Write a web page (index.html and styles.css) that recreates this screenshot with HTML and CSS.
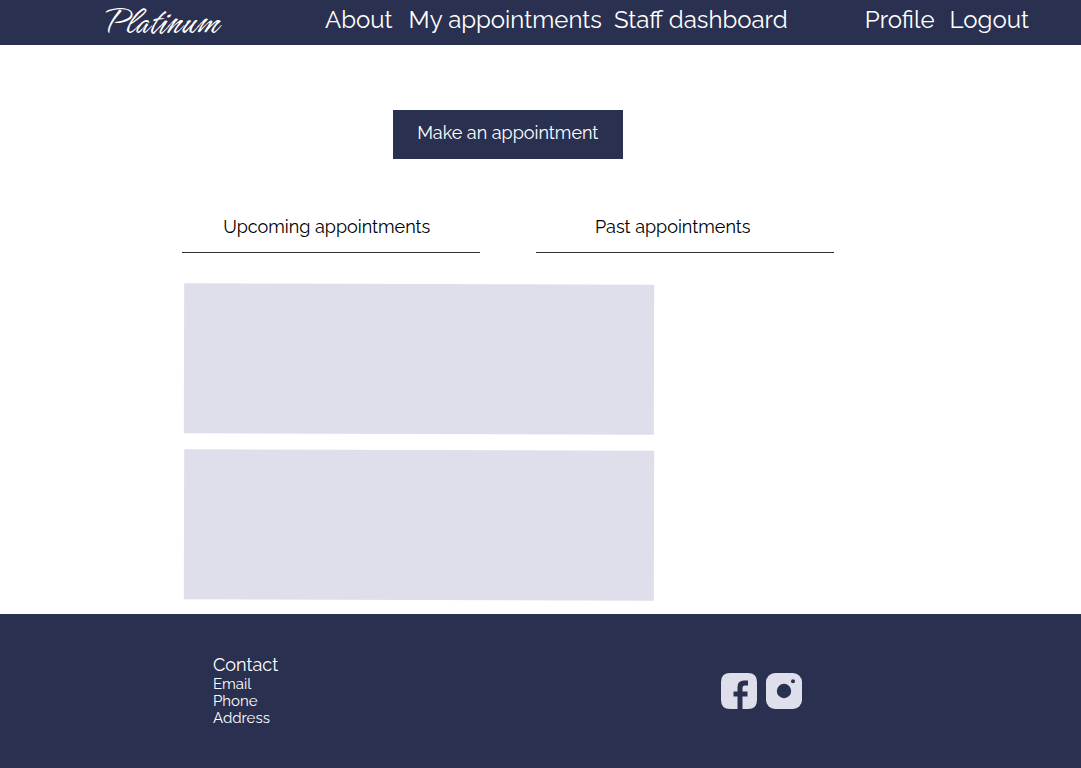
FILE: index.html
```html
<!DOCTYPE html>
<html lang="en">
<head>
<meta charset="utf-8">
<meta name="viewport" content="width=device-width, initial-scale=1">
<title>Platinum – My appointments</title>
<link rel="stylesheet" href="styles.css">
</head>
<body>
<header class="site-header">
  <a class="logo" href="#">Platinum</a>
  <nav class="nav nav-main" aria-label="Main">
    <a class="nav-wide" href="#">About</a>
    <a href="#">My appointments</a>
    <a href="#">Staff dashboard</a>
  </nav>
  <nav class="nav nav-account" aria-label="Account">
    <a href="#">Profile</a>
    <a href="#">Logout</a>
  </nav>
</header>
<main class="content">
  <button class="make-button" type="button">Make an appointment</button>
  <div class="tabs" role="tablist">
    <button class="tab tab-upcoming" type="button" role="tab" aria-selected="true">Upcoming appointments</button>
    <button class="tab tab-past" type="button" role="tab" aria-selected="false">Past appointments</button>
  </div>
  <div class="cards">
    <article class="card"></article>
    <article class="card"></article>
  </div>
</main>
<footer class="site-footer">
  <address class="contact">
    <h2 class="contact-title">Contact</h2>
    <a href="#">Email</a>
    <a href="#">Phone</a>
    <a href="#">Address</a>
  </address>
  <div class="social">
    <a href="#" aria-label="Facebook">
      <svg width="36" height="36" viewBox="0 0 36 36"><path fill="#dfdeeb" d="M9 0H27Q36 0 36 9V27Q36 36 27 36H21.500V23.500H26.500V18.500H21.500V15Q21.500 12.500 24 12.500H27V7.500H23Q16.500 7.500 16.500 14V18.500H12.500V23.500H16.500V36H9Q0 36 0 27V9Q0 0 9 0Z"/></svg>
    </a>
    <a href="#" aria-label="Instagram">
      <svg width="36" height="36" viewBox="0 0 36 36"><rect width="36" height="36" rx="9" fill="#dfdeeb"/><circle cx="18" cy="18" r="7.200" fill="#2a3050"/><circle cx="27" cy="8.300" r="2" fill="#2a3050"/></svg>
    </a>
  </div>
</footer>
</body>
</html>
```
FILE: styles.css
```css
* { box-sizing: border-box; }

body {
  margin: 0;
  min-height: 100vh;
  display: flex;
  flex-direction: column;
  background: #fff;
  color: #000;
  font-family: Raleway, Lato, sans-serif;
  font-size: 18px;
}

a { color: inherit; text-decoration: none; }

button { font: inherit; cursor: pointer; }

.site-header {
  display: flex;
  min-height: 45px;
  padding: 0 52px 0 106px;
  background: #2a3050;
  color: #fff;
}

.logo {
  flex: 0 0 219px;
  font-family: Hurricane, "Liberation Serif", serif;
  font-size: 42px;
  line-height: 44px;
}

.nav {
  display: flex;
  font-size: 24px;
  line-height: 40px;
  white-space: nowrap;
}

.nav-main { gap: 12px; }

.nav-wide { padding-right: 4px; }

.nav-account { margin-left: auto; gap: 15px; }

.content { padding: 65px 17% 14px; }

.make-button {
  display: block;
  width: 230px;
  height: 49px;
  margin: 0 0 0 209px;
  padding: 0 0 4px;
  border: 0;
  background: #2a3050;
  color: #fff;
}

.tabs {
  display: flex;
  gap: 56px;
  margin: 43px 0 31px -2px;
}

.tab {
  width: 298px;
  height: 51px;
  padding: 0 0 2px;
  border: 0;
  border-bottom: 1px solid #333;
  background: none;
  color: #000;
}

.tab-upcoming { padding-right: 8px; }

.tab-past { padding-right: 24px; }

.cards {
  display: grid;
  gap: 16px;
  max-width: 470px;
}

.card {
  height: 150px;
  background: #dfdeeb;
  transform: rotate(0.17deg);
}

.site-footer {
  flex-grow: 1;
  display: flex;
  justify-content: space-between;
  align-items: flex-start;
  padding: 40px 279px 40px 213px;
  background: #2a3050;
  color: #fff;
}

.contact {
  display: grid;
  font-size: 15px;
  font-style: normal;
  line-height: 17px;
}

.contact-title {
  margin: 0;
  font-size: 18px;
  font-weight: 400;
  line-height: 22px;
}

.social { display: flex; gap: 9px; padding-top: 19px; }

.social svg { display: block; }
```
